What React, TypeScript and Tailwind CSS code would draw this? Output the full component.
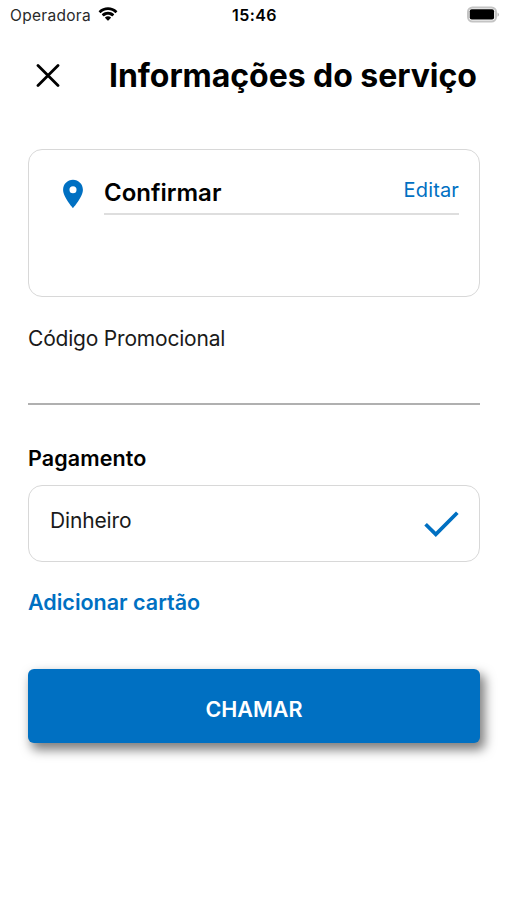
import { MdPlace } from "react-icons/md";

function StatusBar() {
  return (
    <div className="grid h-[30px] grid-cols-3 items-center pl-[10px] pr-[8px] text-[15.5px] leading-none text-[#2a2a2a]">
      <div className="flex items-center gap-[7px]">
        <span className="whitespace-nowrap pt-[2px] tracking-[0.3px]">Operadora</span>
        <svg className="mb-px" width="20" height="15" viewBox="0 0 20 15" fill="#000">
          <path d="M10 3.1c2.8 0 5.3 1.1 7.2 2.9.2.2.4.2.6 0l1.4-1.4c.2-.2.2-.5 0-.7C14.2-1 5.8-1 .8 3.9c-.2.2-.2.5 0 .7l1.4 1.4c.2.2.4.2.6 0C4.7 4.2 7.2 3.1 10 3.1z" />
          <path d="M10 7.7c1.5 0 2.9.6 4 1.5.2.2.4.2.6 0L16 7.8c.2-.2.2-.5 0-.7-3.3-3.1-8.7-3.1-12 0-.2.2-.2.5 0 .7l1.4 1.4c.2.2.4.2.6 0 1.1-.9 2.5-1.5 4-1.5z" />
          <path d="M12.8 11c.2-.2.2-.5 0-.7-1.6-1.4-4-1.4-5.6 0-.2.2-.2.5 0 .7l2.4 2.5c.2.2.6.2.8 0z" />
        </svg>
      </div>
      <span className="text-center text-[16px] font-semibold tracking-[0.4px] text-black">15:46</span>
      <svg className="mb-[2px] justify-self-end" width="33" height="17" viewBox="0 0 33 17">
        <rect x="2" y="1.5" width="28" height="14" rx="4.5" fill="none" stroke="#c4c4c4" strokeWidth="2" />
        <rect x="3.7" y="3.3" width="24.4" height="10.2" rx="2" fill="#000" />
        <path d="M31.6 6.5c1.6.8 1.6 3.4 0 4.2z" fill="#aaa" />
      </svg>
    </div>
  );
}

export default function App() {
  return (
    <div className="h-[900px] w-[507px] overflow-hidden bg-white font-['Inter','Liberation_Sans',sans-serif] text-black">
      <StatusBar />
      <header className="flex h-[92px] items-center pl-[36px]">
        <button aria-label="Fechar">
          <svg width="24" height="24" viewBox="0 0 24 24" fill="none" stroke="#000" strokeWidth="2.8" strokeLinecap="round">
            <path d="M2 1.5l20 20M22 1.5l-20 20" />
          </svg>
        </button>
        <h1 className="ml-[49px] whitespace-nowrap text-[32px] font-bold tracking-[-0.05px]">Informações do serviço</h1>
      </header>

      <main className="pl-[28px] pr-[27px] pt-[27px]">
        <section className="flex h-[148px] rounded-[14px] border-[1.5px] border-[#d8d8d8] pl-[27px] pr-[20px] pt-[24px]">
          <MdPlace size={34} className="mt-[3px] shrink-0 text-[#0070c2]" />
          <div className="ml-[14px] flex h-[41px] flex-1 justify-between border-b-2 border-[#dedede]">
            <span className="pt-[1px] text-[24px] font-semibold leading-[36px]">Confirmar</span>
            <button className="h-[32px] text-[20px] tracking-[0.15px] text-[#0070c2]">Editar</button>
          </div>
        </section>

        <div className="mt-[25px] h-[83px] border-b-2 border-[#b0b0b0] text-[21px] leading-[33px] tracking-[-0.2px] text-[#1a1a1a]">
          Código Promocional
        </div>

        <h2 className="mt-[37px] text-[21.5px] font-semibold leading-[32px] tracking-[0.1px]">Pagamento</h2>
        <section className="mt-[11px] flex h-[77px] items-center justify-between rounded-[14px] border-[1.5px] border-[#d8d8d8] pl-[21px] pr-[20px]">
          <span className="pb-[6px] text-[21px] tracking-[-0.15px] text-[#1a1a1a]">Dinheiro</span>
          <svg width="35" height="26" viewBox="0 0 35 26" fill="none" stroke="#0070c2" strokeWidth="3.7">
            <path d="M1.6 13.2l10.2 10.1L33.3 1.7" />
          </svg>
        </section>

        <button className="mt-[24px] block text-[21.5px] font-semibold leading-[32px] text-[#0070c2]">Adicionar cartão</button>
        <button className="mt-[51px] h-[74px] w-full rounded-[6px] bg-[#0070c2] pt-[6px] text-[21.5px] font-semibold text-white shadow-[4px_6px_11px_1px_rgba(0,0,0,0.5)]">
          CHAMAR
        </button>
      </main>
    </div>
  );
}
